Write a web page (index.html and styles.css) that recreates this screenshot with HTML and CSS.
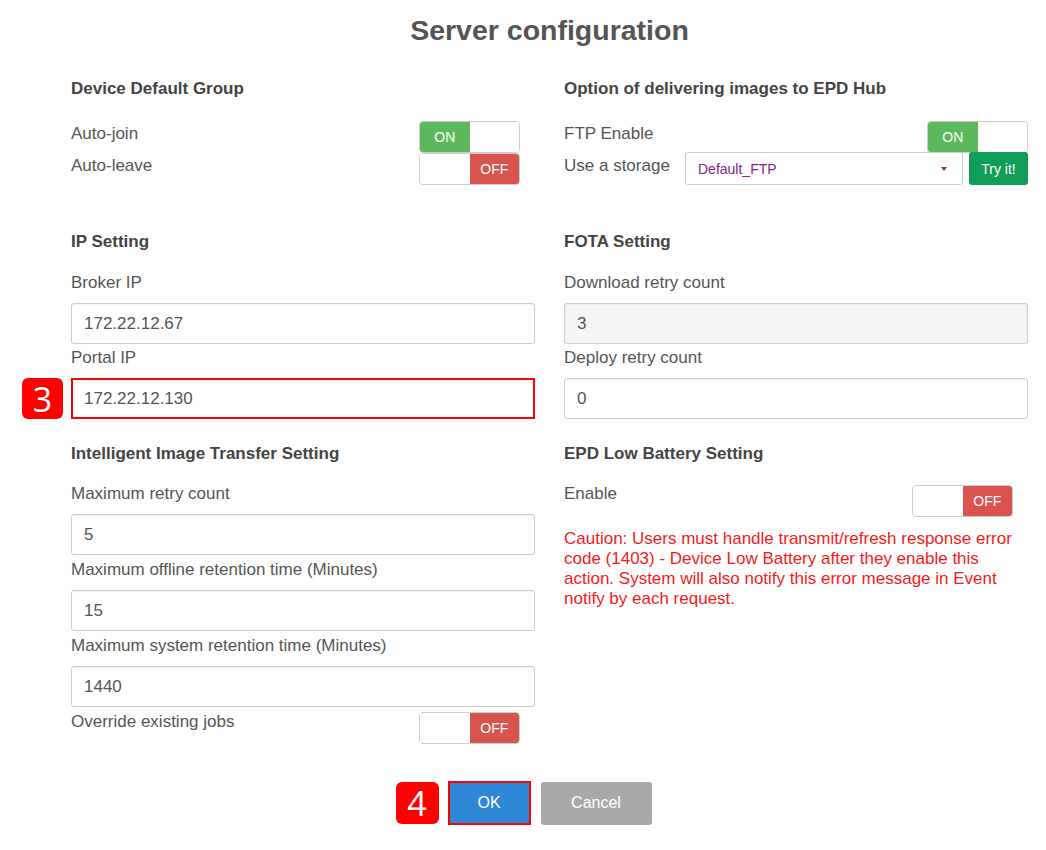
FILE: index.html
```html
<!DOCTYPE html>
<html>
<head>
<meta charset="utf-8">
<link rel="stylesheet" href="styles.css">
</head>
<body>
<div class="dialog">
  <h1 class="title">Server configuration</h1>

  <div class="row row-1">
    <section class="section">
      <h2 class="heading">Device Default Group</h2>
      <div class="switch-row">
        <span class="label">Auto-join</span>
        <div class="toggle toggle-on inset"><span class="knob on">ON</span><span class="knob blank"></span></div>
      </div>
      <div class="switch-row">
        <span class="label">Auto-leave</span>
        <div class="toggle toggle-off inset"><span class="knob blank"></span><span class="knob off">OFF</span></div>
      </div>
    </section>
    <section class="section">
      <h2 class="heading">Option of delivering images to EPD Hub</h2>
      <div class="switch-row">
        <span class="label">FTP Enable</span>
        <div class="toggle toggle-on"><span class="knob on">ON</span><span class="knob blank"></span></div>
      </div>
      <div class="storage-row">
        <span class="label storage-label">Use a storage</span>
        <div class="select"><span class="select-text">Default_FTP</span><span class="caret"></span></div>
        <button class="try-btn">Try it!</button>
      </div>
    </section>
  </div>

  <div class="row row-2">
    <section class="section">
      <h2 class="heading">IP Setting</h2>
      <div class="group">
        <div class="label">Broker IP</div>
        <div class="input">172.22.12.67</div>
      </div>
      <div class="group">
        <div class="label">Portal IP</div>
        <div class="input-wrap">
          <span class="badge badge-3">3</span>
          <div class="input highlight">172.22.12.130</div>
        </div>
      </div>
    </section>
    <section class="section">
      <h2 class="heading">FOTA Setting</h2>
      <div class="group">
        <div class="label">Download retry count</div>
        <div class="input disabled">3</div>
      </div>
      <div class="group">
        <div class="label">Deploy retry count</div>
        <div class="input">0</div>
      </div>
    </section>
  </div>

  <div class="row row-3">
    <section class="section">
      <h2 class="heading">Intelligent Image Transfer Setting</h2>
      <div class="group">
        <div class="label">Maximum retry count</div>
        <div class="input">5</div>
      </div>
      <div class="group">
        <div class="label">Maximum offline retention time (Minutes)</div>
        <div class="input">15</div>
      </div>
      <div class="group">
        <div class="label">Maximum system retention time (Minutes)</div>
        <div class="input">1440</div>
      </div>
      <div class="switch-row override">
        <span class="label label-top">Override existing jobs</span>
        <div class="toggle toggle-off inset"><span class="knob blank"></span><span class="knob off">OFF</span></div>
      </div>
    </section>
    <section class="section">
      <h2 class="heading">EPD Low Battery Setting</h2>
      <div class="switch-row enable">
        <span class="label label-top">Enable</span>
        <div class="toggle toggle-off inset"><span class="knob blank"></span><span class="knob off">OFF</span></div>
      </div>
      <p class="caution">Caution: Users must handle transmit/refresh response error code (1403) - Device Low Battery after they enable this action. System will also notify this error message in Event notify by each request.</p>
    </section>
  </div>

  <div class="actions">
    <div class="ok-wrap">
      <span class="badge badge-4">4</span>
      <button class="btn btn-ok">OK</button>
    </div>
    <button class="btn btn-cancel">Cancel</button>
  </div>
</div>
</body>
</html>
```

FILE: styles.css
```css
* { box-sizing: border-box; }

body {
  margin: 0;
  background: #fff;
  font-family: "Liberation Sans", Arial, sans-serif;
  color: #555;
}

.dialog {
  width: 1046px;
  padding: 13px 18px 0 71px;
}

.title {
  margin: 0 0 32px;
  font-size: 28.5px;
  line-height: 34px;
  font-weight: bold;
  color: #555;
  text-align: center;
}

.row {
  display: grid;
  grid-template-columns: 464px 464px;
  column-gap: 29px;
}

.row-1 { margin-bottom: 47px; }
.row-2 { margin-bottom: 21px; }
.row-3 { margin-bottom: 37px; }

.heading {
  margin: 0 0 20px;
  font-size: 17px;
  line-height: 20px;
  font-weight: bold;
  color: #444;
}

.row-1 .heading { margin-bottom: 22px; }
.row-2 .heading { margin-bottom: 21px; }

.label {
  display: block;
  font-size: 17px;
  line-height: 20px;
  color: #555;
}

.switch-row {
  display: flex;
  justify-content: space-between;
  align-items: flex-start;
  height: 32px;
}

.switch-row .label { padding-top: 3px; }
.switch-row .label-top { padding-top: 0; }

.toggle {
  display: flex;
  width: 101px;
  height: 32px;
  border: 1px solid #ccc;
  border-radius: 4px;
  overflow: hidden;
  background: #fff;
}

.toggle.inset { margin-right: 15px; }

.knob {
  flex: 1;
  display: flex;
  align-items: center;
  justify-content: center;
  font-size: 14px;
  color: #fff;
}

.knob.on { background: #5cb85c; }
.knob.off { background: #d9534f; }
.knob.blank { background: #fff; }

.storage-row {
  display: flex;
  align-items: flex-start;
  margin-top: -1px;
}

.storage-label {
  width: 121px;
  padding-top: 4px;
}

.select {
  position: relative;
  display: flex;
  align-items: center;
  width: 278px;
  height: 33px;
  border: 1px solid #ccc;
  border-radius: 3px;
  padding: 0 12px;
  font-size: 14px;
  color: #862486;
}

.caret {
  position: absolute;
  right: 15px;
  top: 14px;
  width: 0;
  height: 0;
  border-left: 3px solid transparent;
  border-right: 3px solid transparent;
  border-top: 4px solid #862486;
}

.try-btn {
  margin-left: 6px;
  width: 59px;
  height: 33px;
  border: none;
  border-radius: 3px;
  background: #0f9d58;
  color: #fff;
  font-family: "Liberation Sans", Arial, sans-serif;
  font-size: 14px;
  padding: 0;
}

.group { margin-bottom: 5px; }
.row-2 .group { margin-bottom: 4px; }

.group .label { margin-bottom: 10px; }

.input {
  display: flex;
  align-items: center;
  height: 41px;
  border: 1px solid #ccc;
  border-radius: 3px;
  padding: 0 12px;
  font-size: 17px;
  color: #555;
  background: #fff;
  box-shadow: inset 0 1px 1px rgba(0,0,0,0.04);
}

.input.disabled { background: #f5f5f5; }

.input.highlight {
  border: 2px solid #f00;
  border-radius: 0;
  padding-left: 11px;
}

.input-wrap { position: relative; }

.badge {
  position: absolute;
  display: flex;
  align-items: center;
  justify-content: center;
  background: #f00;
  color: #fff;
  border-radius: 6px;
  font-family: "Open Sans", "Liberation Sans", sans-serif;
  font-size: 34px;
  line-height: 1;
}

.badge-3 {
  right: calc(100% + 8px);
  top: 0;
  width: 41px;
  height: 41px;
}

.enable { height: 34px; }
.enable .toggle { margin-top: 1px; }

.caution {
  margin: 11px 0 0;
  font-size: 17px;
  line-height: 20px;
  color: #f61a1a;
}

.actions {
  display: flex;
  justify-content: center;
  align-items: center;
  gap: 10px;
}

.ok-wrap { position: relative; }

.badge-4 {
  right: calc(100% + 9px);
  top: 1px;
  width: 43px;
  height: 42px;
}

.btn {
  border: none;
  color: #fff;
  font-family: "Liberation Sans", Arial, sans-serif;
  font-size: 16px;
  padding: 0;
}

.btn-ok {
  display: block;
  width: 83px;
  height: 44px;
  background: #2e86d6;
  border: 2px solid #f00;
}

.btn-cancel {
  width: 111px;
  height: 43px;
  background: #a9a9a9;
  border-radius: 3px;
}
```
